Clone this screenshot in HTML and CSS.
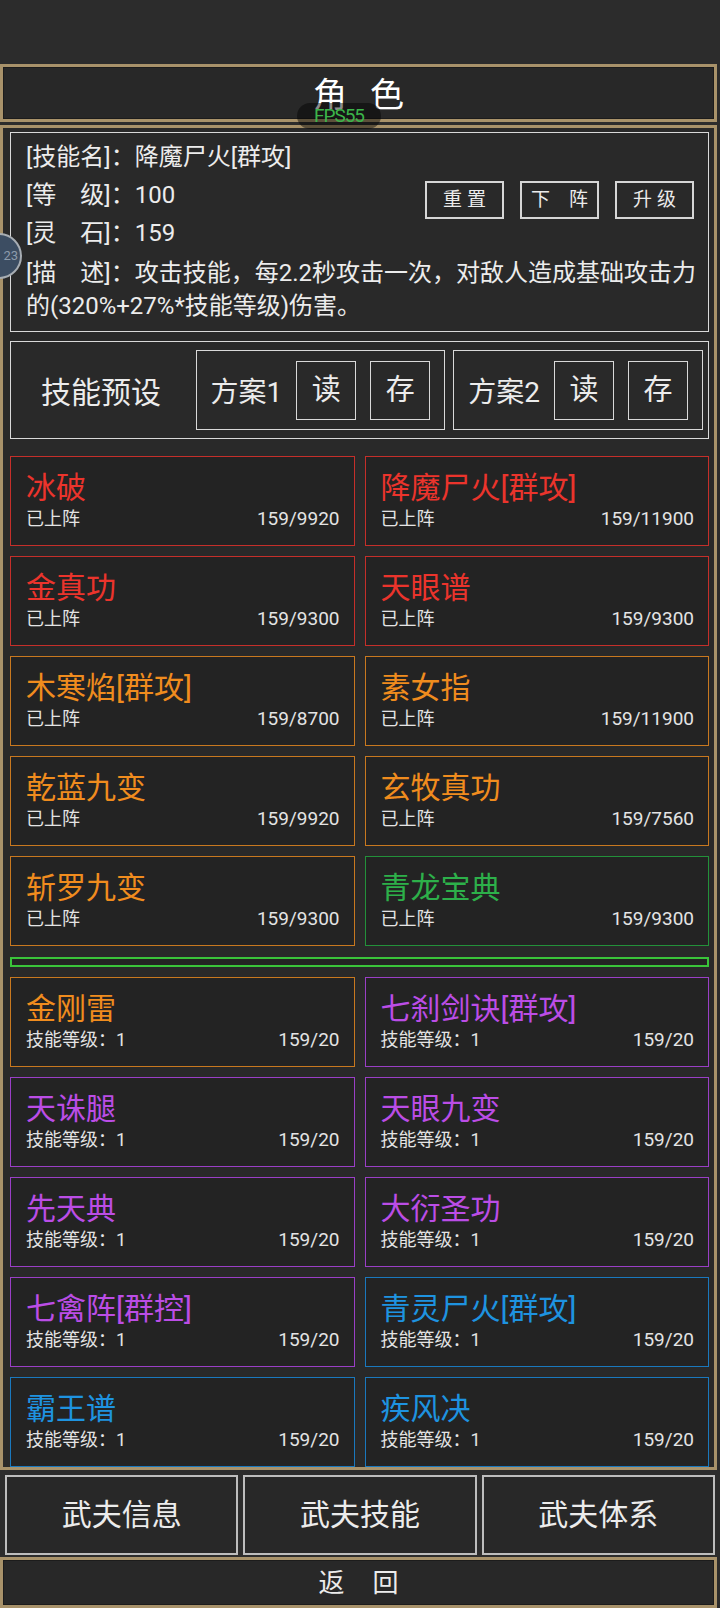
FILE: index.html
```
<html>
<head>
	<title>角色</title>
	<link rel="stylesheet" href="styles.css">
</head>
<body>
	<div id="top-gap"></div>
	<div id="title-bar">
		<span class="title">角色</span>
		<span id="fps">FPS55</span>
	</div>
	<div id="frame">
		<div id="info">
			<div class="info-top">
				<div class="info-lines">
					<div class="line">[技能名]：降魔尸火[群攻]</div>
					<div class="line">[等　级]：100</div>
					<div class="line">[灵　石]：159</div>
				</div>
				<div class="ops">
					<a href="javascript:;" class="op">重置</a>
					<a href="javascript:;" class="op op-wide">下　阵</a>
					<a href="javascript:;" class="op">升级</a>
				</div>
			</div>
			<div class="desc">[描　述]：攻击技能，每2.2秒攻击一次，对敌人造成基础攻击力<br>的(320%+27%*技能等级)伤害。</div>
		</div>
		<div id="preset">
			<span class="preset-name">技能预设</span>
			<div class="plan plan-first">
				<span class="plan-name">方案1</span>
				<a href="javascript:;" class="plan-btn">读</a>
				<a href="javascript:;" class="plan-btn">存</a>
			</div>
			<div class="plan">
				<span class="plan-name">方案2</span>
				<a href="javascript:;" class="plan-btn">读</a>
				<a href="javascript:;" class="plan-btn">存</a>
			</div>
		</div>
		<div class="grid grid-first">
			<div class="card red"><div class="name">冰破</div><div class="stat"><span>已上阵</span><span class="num">159/9920</span></div></div>
			<div class="card red"><div class="name">降魔尸火[群攻]</div><div class="stat"><span>已上阵</span><span class="num">159/11900</span></div></div>
			<div class="card red"><div class="name">金真功</div><div class="stat"><span>已上阵</span><span class="num">159/9300</span></div></div>
			<div class="card red"><div class="name">天眼谱</div><div class="stat"><span>已上阵</span><span class="num">159/9300</span></div></div>
			<div class="card orange"><div class="name">木寒焰[群攻]</div><div class="stat"><span>已上阵</span><span class="num">159/8700</span></div></div>
			<div class="card orange"><div class="name">素女指</div><div class="stat"><span>已上阵</span><span class="num">159/11900</span></div></div>
			<div class="card orange"><div class="name">乾蓝九变</div><div class="stat"><span>已上阵</span><span class="num">159/9920</span></div></div>
			<div class="card orange"><div class="name">玄牧真功</div><div class="stat"><span>已上阵</span><span class="num">159/7560</span></div></div>
			<div class="card orange"><div class="name">斩罗九变</div><div class="stat"><span>已上阵</span><span class="num">159/9300</span></div></div>
			<div class="card green"><div class="name">青龙宝典</div><div class="stat"><span>已上阵</span><span class="num">159/9300</span></div></div>
		</div>
		<div id="divider"></div>
		<div class="grid">
			<div class="card orange"><div class="name">金刚雷</div><div class="stat"><span>技能等级：1</span><span class="num">159/20</span></div></div>
			<div class="card purple"><div class="name">七刹剑诀[群攻]</div><div class="stat"><span>技能等级：1</span><span class="num">159/20</span></div></div>
			<div class="card purple"><div class="name">天诛腿</div><div class="stat"><span>技能等级：1</span><span class="num">159/20</span></div></div>
			<div class="card purple"><div class="name">天眼九变</div><div class="stat"><span>技能等级：1</span><span class="num">159/20</span></div></div>
			<div class="card purple"><div class="name">先天典</div><div class="stat"><span>技能等级：1</span><span class="num">159/20</span></div></div>
			<div class="card purple"><div class="name">大衍圣功</div><div class="stat"><span>技能等级：1</span><span class="num">159/20</span></div></div>
			<div class="card purple"><div class="name">七禽阵[群控]</div><div class="stat"><span>技能等级：1</span><span class="num">159/20</span></div></div>
			<div class="card blue"><div class="name">青灵尸火[群攻]</div><div class="stat"><span>技能等级：1</span><span class="num">159/20</span></div></div>
			<div class="card blue"><div class="name">霸王谱</div><div class="stat"><span>技能等级：1</span><span class="num">159/20</span></div></div>
			<div class="card blue"><div class="name">疾风决</div><div class="stat"><span>技能等级：1</span><span class="num">159/20</span></div></div>
		</div>
	</div>
	<div id="tabs">
		<a href="javascript:;" class="tab">武夫信息</a>
		<a href="javascript:;" class="tab">武夫技能</a>
		<a href="javascript:;" class="tab">武夫体系</a>
	</div>
	<a href="javascript:;" id="back">返回</a>
	<div id="ball">23</div>
</body>
</html>
```
FILE: styles.css
```
*{
	box-sizing: border-box;
}

body{
	position: relative;
	margin: 0;
	width: 720px;
	height: 1608px;
	overflow: hidden;
	background: #2c2c2c;
	color: #ececec;
	font-family: Roboto, "Noto Sans CJK SC", sans-serif;
}

a{
	color: inherit;
	text-decoration: none;
}

#top-gap{
	height: 64px;
}

#title-bar{
	position: relative;
	width: 717px;
	height: 58px;
	padding-top: 4px;
	border: 3px solid #a8926a;
	box-shadow: inset 0 0 0 1px #1c1c1c;
	background: #282828;
	text-align: center;
	line-height: 48px;
}

#title-bar .title{
	font-size: 34px;
	letter-spacing: 23px;
	padding-left: 23px;
	color: #fff;
}

/* fps 小浮层，压在标题栏下边 */
#fps{
	position: absolute;
	left: 294px;
	top: 36px;
	z-index: 5;
	width: 84px;
	height: 26px;
	border-radius: 13px;
	background: rgba(0,0,0,.45);
	color: #3cb54a;
	font-size: 19px;
	line-height: 26px;
	letter-spacing: -1px;
	text-align: center;
}

#frame{
	width: 717px;
	margin-top: 3px;
	padding: 4px 5px 0 7px;
	border: 3px solid #a8926a;
	background: #292929;
}

#info{
	padding: 5px 0 8px 15px;
	border: 1px solid #d9d9d9;
	font-size: 24px;
}

#info .info-top{
	display: flex;
	justify-content: space-between;
}

#info .line{
	height: 38px;
	line-height: 38px;
}

#info .ops{
	display: flex;
	gap: 16px;
	margin-top: 43px;
	margin-right: 14px;
}

#info .op{
	width: 79px;
	height: 38px;
	border: 2px solid #d6d6d6;
	font-size: 19px;
	line-height: 34px;
	letter-spacing: 5px;
	text-indent: 5px;
	text-align: center;
	white-space: nowrap;
}

#info .op-wide{
	letter-spacing: 0;
	text-indent: 0;
}

#info .desc{
	margin-top: 5px;
	line-height: 33px;
	white-space: nowrap;
}

#preset{
	display: flex;
	align-items: center;
	gap: 8px;
	height: 98px;
	margin-top: 9px;
	padding: 0 5px 0 30px;
	border: 1px solid #d9d9d9;
}

#preset .preset-name{
	font-size: 30px;
}

#preset .plan{
	display: flex;
	align-items: center;
	gap: 14px;
	height: 80px;
	padding: 0 14px;
	border: 1px solid #d9d9d9;
}

#preset .plan-first{
	margin-left: auto;
}

#preset .plan-name{
	font-size: 28px;
}

#preset .plan-btn{
	width: 60px;
	height: 59px;
	border: 1px solid #d9d9d9;
	font-size: 29px;
	line-height: 57px;
	text-align: center;
}

.grid{
	display: grid;
	grid-template-columns: 1fr 1fr;
	gap: 10px;
}

.grid-first{
	margin-top: 17px;
}

.card{
	height: 90px;
	padding: 13px 14px 0 15px;
	border: 1px solid;
	background: #232323;
}

.card .name{
	font-size: 30px;
	line-height: 36px;
}

.card .stat{
	display: flex;
	justify-content: space-between;
	margin-top: 2px;
	color: #e4e4e4;
	font-size: 18px;
	line-height: 22px;
}

.card .num{
	font-size: 19px;
}

.red{
	border-color: #c52f2a;
	color: #eb342c;
}

.orange{
	border-color: #c8781f;
	color: #f08c1e;
}

.green{
	border-color: #23913a;
	color: #2db04a;
}

.purple{
	border-color: #9a3fc6;
	color: #bb4de6;
}

.blue{
	border-color: #1a78bd;
	color: #1e93e0;
}

#divider{
	height: 10px;
	margin: 11px 0 10px;
	border: 2px solid #3ac43a;
	background: #232323;
}

#tabs{
	display: flex;
	gap: 5px;
	margin-top: 5px;
	padding: 0 5px;
}

#tabs .tab{
	flex: 1;
	height: 80px;
	border: 2px solid #bdbdbd;
	background: #282828;
	font-size: 30px;
	line-height: 76px;
	text-align: center;
}

#back{
	display: block;
	width: 717px;
	height: 51px;
	margin-top: 2px;
	border: 3px solid #a8926a;
	box-shadow: inset 0 0 0 1px #1c1c1c;
	background: #282828;
	font-size: 26px;
	line-height: 46px;
	letter-spacing: 28px;
	text-indent: 28px;
	text-align: center;
}

#ball{
	position: absolute;
	left: -24px;
	top: 233px;
	width: 46px;
	height: 46px;
	border: 2px solid #a7adb3;
	border-radius: 50%;
	background: #3c4d62;
	color: #8d9bab;
	font-size: 13px;
	line-height: 42px;
	text-align: right;
	padding-right: 2px;
}
```
